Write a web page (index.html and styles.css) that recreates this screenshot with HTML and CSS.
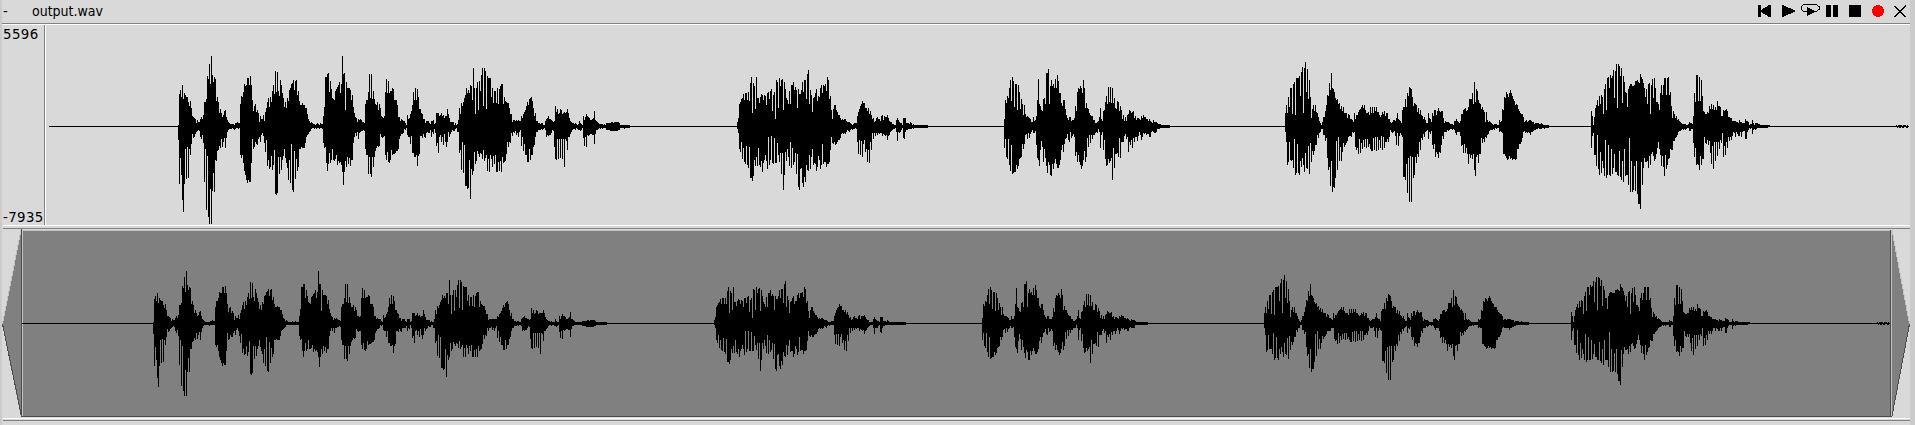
FILE: index.html
```html
<!DOCTYPE html>
<html lang="en">
<head>
<meta charset="utf-8">
<title>output.wav</title>
<link rel="stylesheet" href="styles.css">
</head>
<body>
<main class="viewer">
  <header class="bar">
    <span class="fold">-</span>
    <span class="name">output.wav</span>
    <svg class="tools" width="152" height="18" viewBox="1758 2 152 18" shape-rendering="crispEdges">
      <path d="M1758 5h3v12h-3zM1771 5v12h-2l-8-5v-2l8-5z"/>
      <path d="M1782 5h1l12 5.500v1l-12 5.500h-1z"/>
      <path d="M1807 7l9 4.500-9 4.500z"/>
      <path d="M1807 11.500h-3l-3-2v-3l3-2h12l3 2v3l-3 2h-2" fill="none" stroke="#000"/>
      <path d="M1826 5h5v12h-5zM1833 5h5v12h-5zM1849 5h12v12h-12z"/>
      <circle cx="1878" cy="11" r="6" fill="#f00"/>
      <path d="M1894.500 6l11.500 11M1906 6l-11.500 11" fill="none" stroke="#000" stroke-width="1.400"/>
    </svg>
  </header>
  <section class="detail">
    <div class="scale"><span>5596</span><span>-7935</span></div>
    <svg class="plot" width="1864" height="200" viewBox="46 25 1864 200" shape-rendering="crispEdges"><path id="wave"/></svg>
  </section>
  <section class="overview">
    <svg width="1908" height="189" viewBox="2 229 1908 189" shape-rendering="crispEdges">
      <path d="M2 324L21 229V417z" fill="#808080"/>
      <path d="M2.500 324L21 230" stroke="#c3c3c3" fill="none"/>
      <path d="M2.500 324L21.500 416" stroke="#4c4c4c" fill="none"/>
      <path d="M1892 230L1910 324L1892 416z" fill="#808080"/>
      <path d="M1892 230L1909.500 324" stroke="#c3c3c3" fill="none"/>
      <path d="M1909.500 324L1892 416" stroke="#4c4c4c" fill="none"/>
      <path d="M22 230h1868v186h-1868z" fill="#808080"/>
      <path d="M22 230h1868v1h-1868zM22 230h1v186h-1zM1891 230h1v186h-1z" fill="#c3c3c3"/>
      <path d="M21 229h1v188h-1zM1890 230h1v187h-1zM21 416h1871v1h-1871z" fill="#4c4c4c"/>
      <path id="mini"/>
    </svg>
  </section>
  <div class="foot"></div>
</main>
<script src="wave.js"></script>
</body>
</html>
```
FILE: styles.css
```css
* { box-sizing: border-box; }
body {
  margin: 0;
  height: 425px;
  overflow: hidden;
  background: #cbcbcb;
  font: 13.33px "DejaVu Sans", sans-serif;
  color: #000;
}
.viewer {
  width: 1908px;
  height: 425px;
  margin-left: 2px;
  background: #d9d9d9;
  display: flex;
  flex-direction: column;
}
svg { display: block; flex: none; }
.bar {
  height: 25px;
  display: flex;
  align-items: flex-start;
  border-bottom: 1px solid #fff;
  box-shadow: inset 0 -1px #808080;
  line-height: 23px;
}
.fold { width: 30px; padding-left: 1px; }
.name { font-family: "DejaVu Sans Condensed", "DejaVu Sans", sans-serif; font-stretch: condensed; font-size: 14px; }
.tools { margin: 2px 0 0 auto; }
.detail { height: 200px; display: flex; }
.scale {
  width: 44px;
  border-right: 1px solid #fff;
  box-shadow: inset -1px 0 #808080;
  display: flex;
  flex-direction: column;
  justify-content: space-between;
  line-height: 16px;
  letter-spacing: 0.4px;
  padding-top: 2px;
  padding-left: 1px;
}
.scale span:last-child { margin-bottom: -1px; }
.overview {
  height: 193px;
  padding-top: 4px;
  background: linear-gradient(#fff 1px, #d9d9d9 1px 3px, #808080 3px 4px, #d9d9d9 4px) 1px 0 / 1907px 100% no-repeat;
}
.foot { height: 3px; margin-left: 1px; border-top: 1px solid #fff; border-bottom: 1px solid #808080; }
```
FILE: wave.js
```js
// Each run: first column, then "above/below" peak heights per column.
const runs = [
[178, `1/13 32/57 36/31 29/48 41/73 27/85 33/57 31/22 29/52 29/20 24/51 20/22 25/28 18/17 10/7 9/11 8/10 7/7 3/5 6/4 4/3 4/4`],
[200, `7/10 9/12 7/8 11/16 24/55 24/22 27/83 50/29 47/90 62/97 42/62 70/97 51/64 44/46 49/65 47/33 25/34 29/24 24/23 13/19`],
[220, `17/21 13/12 9/20 11/15 15/11 16/21 9/11 6/5 4/3 3/2 2/2 2/2 2/1 2/2 1/3 3/2 3/1 4/1 3/2 3/1`],
[240, `22/28 30/31 29/28 34/36 42/44 40/48 41/53 48/56 48/53 41/55 50/55 41/36 26/12 15/22 20/20 22/15 14/17 16/18 13/12 4/10`],
[260, `10/15 7/8 7/6 11/9 5/16 14/25 18/13 24/39 28/33 19/42 29/40 24/29 35/43 41/38 32/23 55/67 34/68 54/66 35/30 30/47`],
[280, `46/30 41/43 33/33 28/29 19/22 24/31 18/36 28/41 25/53 36/33 38/56 42/17 43/63 46/65 36/24 45/52 46/32 31/44 35/40 25/22`],
[300, `21/22 21/20 23/21 21/21 21/21 18/16 18/10 12/8 7/7 5/5 3/4 4/2 3/1 2/1 2/2 1/1 2/2 3/1 2/1 1/2 3/1 2/1 2/2`],
[323, `10/16 19/21 49/20 49/36 52/44 53/37 34/26 45/36 37/33 28/22 27/33 26/34 35/32 37/28 39/38 41/34 44/36`],
[340, `33/35 42/38 70/45 52/58 53/45 16/34 44/40 38/30 38/37 38/31 36/39 26/33 31/33 19/16 13/10 9/6 8/9 4/5 7/12 6/6`],
[360, `7/5 6/4 4/4 4/3 3/4 22/22 26/28 26/28 34/47 52/30 28/47 52/50 27/30 35/40 27/30 22/24 21/21 24/19 16/20 22/19`],
[380, `18/7 10/10 9/11 8/10 10/9 34/28 47/33 33/25 45/35 33/36 35/33 35/23 38/28 37/27 26/27 26/26 26/24 21/24 9/22 9/12`],
[400, `5/9 7/7 6/7 5/6 5/2 3/3 1/1 11/8 7/10 8/10 12/17 15/9 21/26 34/26 26/30 38/30 26/28 37/39 29/29 17/27`],
[420, `17/9 13/9 12/11 7/7 7/10 3/11 5/6 5/5 5/6 3/6 2/3 5/10 5/5 6/7 2/2 3/6 13/19 13/16 13/26 10/10`],
[440, `11/8 13/15 10/10 11/18 8/7 10/15 10/20 17/15 12/5 8/10 4/7 4/5 4/3 4/4 1/4 3/2 1/1 2/5 6/5 18/26`],
[460, `12/23 23/43 20/15 24/46 28/18 31/59 38/59 33/62 36/61 33/33 41/72 40/42 26/48 58/44 38/25 12/37 38/34 44/24 16/27 45/30`],
[480, `35/26 51/27 58/32 20/23 58/34 55/31 17/28 50/44 48/32 48/45 48/28 29/32 38/40 23/29 35/37 35/28 23/45 38/45 22/35 37/44`],
[500, `40/34 42/45 42/30 22/36 29/35 25/34 24/27 23/15 23/20 18/15 12/16 12/6 4/9 6/5 6/6 5/4 6/8 5/6 6/10 5/5`],
[520, `5/3 10/19 8/10 12/24 14/17 16/28 20/28 24/35 21/35 27/22 28/33 29/28 25/28 18/20 10/18 13/10 5/5 5/5 3/3 3/3`],
[540, `2/3 3/2 3/3 1/2 1/1 5/3 7/10 8/8 10/9 7/8 7/8 6/6 5/3 4/4 5/20 20/32 14/33 17/12 12/32 13/12`],
[560, `17/31 16/12 12/32 13/12 14/40 13/12 14/14 17/23 13/10 8/10 5/7 4/5 3/3 3/2 2/2 3/3 2/1 1/2 2/3 5/3`],
[580, `3/4 2/3 1/1 10/11 6/19 9/10 12/20 10/8 9/9 8/8 6/7 6/7 7/8 8/8 15/17 6/7 5/3 4/3 3/2 2/1`],
[600, `2/2 2/1 2/2 1/1 2/1 1/1 3/3 3/3 3/3 3/3 3/4 4/4 4/4 3/4 4/4 4/4 4/4 4/4 4/3 3/3 1/1 1/1 1/1 1/1 1/2 1/1 1/1 1/1 1/1 1/1`],
[737, `4/2 8/6 22/22 24/25 27/15 28/32 32/21 26/35 33/37 33/19 26/38 34/41 25/20 43/51 49/51 13/54 43/49 40/33 17/39 49/30 28/39 28/21 23/38`],
[760, `29/40 32/34 31/45 26/36 31/33 30/28 21/34 33/42 34/10 27/38 35/33 37/9 15/36 31/37 34/11 7/36 46/36 44/16 18/28 48/35`],
[780, `40/26 46/47 47/26 16/63 44/48 37/25 28/34 26/22 22/30 35/39 22/15 41/41 41/21 44/38 36/35 39/26 36/47 18/27 37/60 32/63 32/42`],
[801, `36/41 44/56 34/60 46/50 46/55 27/38 52/43 56/44 22/28 36/42 31/30 14/22 28/38 29/36 33/37 37/44 25/40 30/29 29/33 38/42`],
[821, `41/38 33/17 41/37 40/35 42/35 35/40 49/37 46/37 27/35 30/23 16/10 7/16 17/17 21/15 21/18 16/17 14/15 11/13 11/13`],
[840, `8/11 6/7 7/6 6/7 7/6 7/7 5/5 4/3 4/4 4/5 3/3 2/2 1/3 2/2 3/2 3/1 3/2 10/15 14/27 17/13 20/28`],
[861, `22/14 25/30 23/17 23/13 18/25 18/22 15/35 18/23 12/36 15/15 11/23 7/6 8/12 4/6 5/9 8/6 9/8 7/6 7/7 5/6`],
[881, `10/6 11/9 6/7 10/8 9/9 9/8 11/13 8/9 5/8 4/5 4/4 2/3 2/2 1/2 1/1 6/5 8/14 6/5 4/6 3/5`],
[901, `3/3 1/1 8/11 8/12 8/5 3/3 3/3 3/2 2/2 4/2 3/2 1/1 2/2 1/1 1/1 1/1 1/1 1/1 1/1 1/1 1/1 1/1 1/1 1/1 1/1 1/1 1/1`],
[1004, `7/21 26/12 23/30 30/32 28/12 38/38 46/44 25/18 49/47 45/46 19/45 42/45 42/38 16/42 41/39 34/32 17/31 27/30`],
[1022, `22/17 11/22 21/17 12/8 9/7 10/12 9/6 8/11 7/7 4/5 4/3 9/6 5/6 6/4 10/18 26/31 47/33 22/39 20/23 16/14`],
[1042, `15/20 27/35 28/22 22/31 53/39 53/46 57/35 22/38 40/48 46/49 40/37 42/42 38/36 47/32 38/37 51/41 45/41 33/38 33/33 23/23`],
[1062, `20/18 26/25 26/17 17/12 11/11 8/7 6/13 9/15 9/5 5/11 6/9 6/7 8/10 20/29 15/25 34/35 38/28 37/35 40/38 38/42`],
[1082, `33/39 46/33 38/24 18/35 23/30 18/11 17/20 13/8 11/16 10/8 10/12 6/8 6/8 3/6 3/5 4/6 5/2 9/5 18/21 7/8 5/5 15/23`],
[1104, `16/13 24/32 30/39 22/38 39/32 24/36 39/34 23/31 38/53 23/21 28/41 18/27 17/27 25/26 24/30 15/11 20/31 16/15 7/15 11/15`],
[1124, `5/9 9/7 5/12 11/10 12/25 16/15 15/18 13/13 14/21 15/11 8/15 10/10 6/10 8/14 8/9 7/5 6/8 10/13 8/10 11/6`],
[1144, `9/7 9/6 7/8 7/7 5/7 7/10 5/10 4/5 3/4 6/5 4/6 4/6 4/5 3/2 2/2 2/2 2/1 1/1 1/1 1/1 1/1 1/1 1/1 1/1 1/1 1/1`],
[1285, `13/5 21/15 13/38 29/35 19/15 38/33 38/34 12/33 42/41 44/12 11/48 48/46 48/17 48/46 50/48 30/34 54/40 59/31 13/38 58/45`],
[1305, `64/26 34/41 57/42 27/19 46/47 29/16 8/35 17/24 21/28 15/24 21/18 14/18 13/8 9/11 5/6 3/5 1/2 4/2 9/8 9/8`],
[1325, `15/14 21/11 31/31 30/43 43/40 36/59 53/34 38/65 37/60 34/61 28/51 26/14 27/43 22/10 23/34 17/20 20/34 15/25 19/16 13/20 13/18`],
[1346, `13/16 8/14 12/10 11/9 7/9 7/10 6/5 4/6 13/5 7/20 11/23 11/21 14/27 16/12 17/26 19/16 21/22 18/13 21/20 16/12`],
[1366, `13/21 13/12 14/20 11/17 19/22 13/24 19/24 13/11 19/23 15/10 19/24 14/10 14/23 11/13 9/21 11/9 14/23 12/10 15/21 10/15 13/15`],
[1387, `13/12 7/15 7/10 4/3 3/5 4/6 6/5 6/4 5/9 8/18 13/6 7/19 6/9 5/6 3/8 16/10 19/50 19/50 27/53 19/37`],
[1407, `33/66 30/31 39/75 38/29 37/75 29/30 20/51 23/48 22/30 21/36 14/27 18/30 12/15 16/23 11/11 10/13 7/7 9/10 6/5 3/4`],
[1427, `3/3 13/12 8/5 7/7 4/4 13/18 10/22 16/17 16/30 11/25 15/27 18/31 15/25 14/26 15/18 15/9 8/12 3/5 5/5 4/5`],
[1447, `4/3 4/4 3/3 2/2 2/2 2/3 1/2 5/3 5/6 7/8 5/5 4/5 3/5 5/9 12/19 12/18 16/26 17/17 18/26`],
[1466, `15/21 16/27 19/37 27/27 27/31 27/28 33/32 22/27 44/43 24/49 37/30 35/28 26/36 23/27 22/27 17/11 19/16 16/12 14/15 4/10`],
[1486, `14/11 6/8 4/7 5/4 4/3 3/3 2/3 1/2 2/3 2/1 2/2 1/1 1/1 6/5 4/4 5/5 17/6 16/27 29/27 28/29`],
[1506, `34/31 32/33 29/32 33/29 36/32 33/31 30/33 27/32 25/32 21/33 22/32 21/22 17/22 15/17 13/17 12/15 12/11 9/5 4/4 5/6`],
[1526, `6/5 4/6 5/5 6/6 6/8 5/5 4/5 4/4 2/3 3/3 3/2 3/2 3/1 2/2 2/2 3/2 2/1 1/1 1/2 1/1 1/1 1/1 1/1`],
[1591, `15/21 10/9 1/6 9/28 18/28 21/39 26/8 20/42 30/48 22/25 31/46 29/34 12/41 37/49 42/13 16/51 48/48`],
[1608, `49/18 38/48 51/49 48/22 50/47 56/41 28/27 55/45 62/45 18/48 62/49 60/24 50/50 58/53 23/34 50/55 44/22 34/49 33/48 19/48`],
[1628, `37/58 40/11 42/65 42/34 40/65 40/63 41/39 45/64 45/34 46/67 44/77 43/77 52/82 49/35 47/58 43/41 38/31 29/35 37/35 22/34`],
[1648, `42/41 43/29 12/38 41/27 47/25 28/29 48/34 38/32 24/27 24/21 22/15 16/22 33/28 41/39 31/29 41/40 48/49 48/28 31/42 48/38`],
[1668, `49/32 31/31 34/22 20/23 8/23 15/14 12/14 8/11 10/10 6/8 7/5 5/4 4/4 3/3 2/2 2/3 2/2 2/3 1/2 1/1`],
[1688, `2/1 4/4 3/4 3/2 2/2 10/16 33/30 24/21 51/38 51/37 25/38 49/43 25/29 46/38 30/32 15/32 14/10 12/16 12/17 14/13`],
[1708, `13/18 20/14 17/26 22/37 17/19 21/42 16/15 19/34 16/15 25/29 20/15 20/22 19/13 10/16 10/6 16/30 15/19 16/28 17/15 15/21`],
[1728, `9/10 9/14 8/10 8/13 5/9 5/5 5/6 5/10 4/5 4/7 3/9 6/9 4/5 4/10 3/5 3/4 3/4 7/12 5/12 5/5 4/3 1/1 2/2 2/1 6/7 3/3 1/2 3/3 3/2 3/1 2/1`],
[1759, `2/1 1/1 1/1 1/1 1/1 1/1 1/1 1/1 1/1 1/0 1/0`],
[1896, `1/0 0/1 1/0 1/1 1/1 1/0 0/1 1/1 1/0 1/0 0/1 1/1`]
];

const peaks = new Map();
for (const [start, text] of runs) {
  text.split(" ").forEach((pair, i) => peaks.set(start + i, pair.split("/").map(Number)));
}

function trace(id, from, to, middle, column, gain) {
  let d = "";
  for (let x = from; x < to; x++) {
    const [above, below] = peaks.get(column(x)) || [0, 0];
    const up = Math.round(above * gain);
    const down = Math.round(below * gain);
    d += `M${x} ${middle - up}h1v${up + down + 1}h-1z`;
  }
  document.getElementById(id).setAttribute("d", d);
}

trace("wave", 49, 1909, 126, x => x, 1);
trace("mini", 22, 1890, 323, x => Math.round((x + 25.56) / 1.0033), 0.743);
```
